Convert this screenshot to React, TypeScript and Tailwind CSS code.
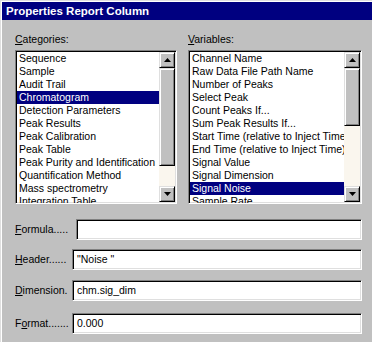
const categories = [
  'Sequence',
  'Sample',
  'Audit Trail',
  'Chromatogram',
  'Detection Parameters',
  'Peak Results',
  'Peak Calibration',
  'Peak Table',
  'Peak Purity and Identification',
  'Quantification Method',
  'Mass spectrometry',
  'Integration Table',
];

const variables = [
  'Channel Name',
  'Raw Data File Path Name',
  'Number of Peaks',
  'Select Peak',
  'Count Peaks If...',
  'Sum Peak Results If...',
  'Start Time (relative to Inject Time)',
  'End Time (relative to Inject Time)',
  'Signal Value',
  'Signal Dimension',
  'Signal Noise',
  'Sample Rate',
];

const raised =
  'border border-t-[#dfdfdf] border-l-[#dfdfdf] border-b-black border-r-black shadow-[inset_1px_1px_0_#ffffff,inset_-1px_-1px_0_#808080] bg-[#c0c0c0]';
const sunken =
  'border border-t-[#808080] border-l-[#808080] border-b-white border-r-white shadow-[inset_1px_1px_0_#000000,inset_-1px_-1px_0_#dfdfdf]';

function Arrow({ down = false }: { down?: boolean }) {
  return (
    <svg width="7" height="4" viewBox="0 0 7 4" className="block">
      {down ? (
        <polygon points="0,0 7,0 3.5,4" fill="#000" />
      ) : (
        <polygon points="3.5,0 7,4 0,4" fill="#000" />
      )}
    </svg>
  );
}

function ListBox({
  items,
  selected,
  thumbHeight,
}: {
  items: string[];
  selected: number;
  thumbHeight: number;
}) {
  return (
    <div className={`${sunken} h-[154px] bg-white flex`}>
      <div className="flex-1 min-w-0 overflow-hidden pt-[1px] pl-[1px]">
        {items.map((item, i) => (
          <div
            key={item}
            className={`h-[13px] leading-[13px] pl-[2px] text-[10.5px] whitespace-nowrap ${
              i === selected ? 'bg-[#000080] text-white' : 'text-black'
            }`}
          >
            {item}
          </div>
        ))}
      </div>
      <div className="w-[16px] flex flex-col bg-[#faf6ee] mt-[1px] mb-[1px] mr-[1px]">
        <div className={`${raised} h-[16px] flex items-center justify-center`}>
          <Arrow />
        </div>
        <div className={raised} style={{ height: thumbHeight }} />
        <div className="flex-1" />
        <div className={`${raised} h-[16px] flex items-center justify-center`}>
          <Arrow down />
        </div>
      </div>
    </div>
  );
}

function Field({
  label,
  hotkey,
  value,
  mt,
  inset = false,
}: {
  label: string;
  hotkey: number;
  value: string;
  mt: string;
  inset?: boolean;
}) {
  return (
    <div className={`flex items-center ${mt}`}>
      <div className="w-[57px] text-[10.5px] leading-[13px] whitespace-nowrap">
        {label.slice(0, hotkey)}
        <span className="underline underline-offset-1">{label[hotkey]}</span>
        {label.slice(hotkey + 1)}
      </div>
      <div
        className={`${sunken} h-[21px] bg-white flex-1 ${inset ? 'ml-[4px]' : ''} pl-[4px] text-[10.5px] leading-[17px] pt-[1px]`}
      >
        {value}
      </div>
    </div>
  );
}

export default function App() {
  return (
    <div
      className="w-[372px] h-[342px] overflow-hidden bg-[#c0c0c0] border-t border-l border-[#dfdfdf] text-black"
      style={{ fontFamily: '"Liberation Sans", Arial, sans-serif' }}
    >
      <div className="h-full border-t border-l border-white">
        <div className="h-[18px] bg-[#000080] text-white font-bold text-[11.5px] leading-[18px] pl-[4px]">
          Properties Report Column
        </div>

        <div className="pl-[13px] pr-[10px] pt-[13px]">
          <div className="flex gap-[11px]">
            <div className="w-[162px]">
              <div className="h-[13px] leading-[13px] text-[10.5px] mb-[4px]">
                <span className="underline underline-offset-1">C</span>ategories:
              </div>
              <ListBox items={categories} selected={3} thumbHeight={98} />
            </div>
            <div className="w-[174px]">
              <div className="h-[13px] leading-[13px] text-[10.5px] mb-[4px]">
                <span className="underline underline-offset-1">V</span>ariables:
              </div>
              <ListBox items={variables} selected={10} thumbHeight={58} />
            </div>
          </div>

          <Field label="Formula....." hotkey={0} value="" mt="mt-[15px]" inset />
          <Field label="Header......" hotkey={0} value={'"Noise "'} mt="mt-[9px]" />
          <Field label="Dimension." hotkey={0} value="chm.sig_dim" mt="mt-[10px]" />
          <Field label="Format......." hotkey={1} value="0.000" mt="mt-[12px]" />
        </div>
      </div>
    </div>
  );
}
